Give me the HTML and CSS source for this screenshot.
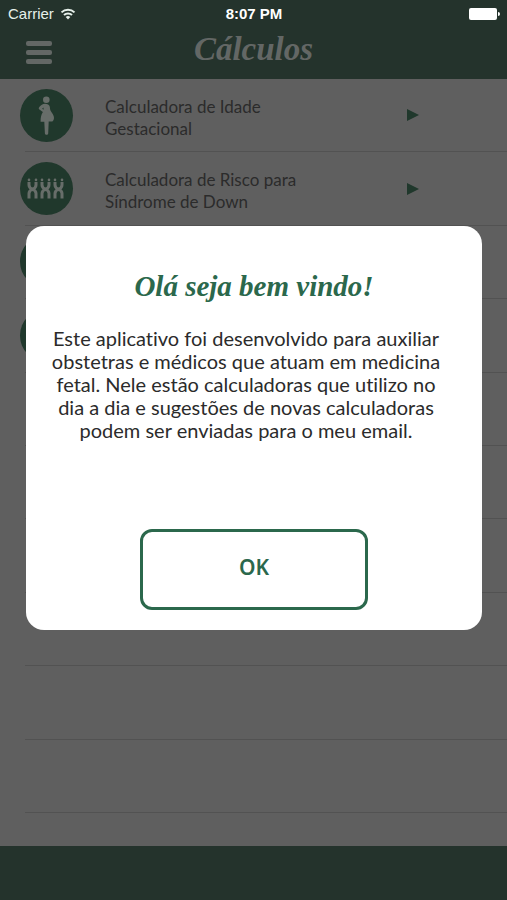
FILE: index.html
```html
<!DOCTYPE html>
<html lang="pt-BR">

<head>
	<meta charset="utf-8">
	<meta name="viewport" content="width=device-width, initial-scale=1">
	<title>Cálculos</title>
	<link rel="stylesheet" href="styles.css">
</head>

<body>
	<div class="app">
		<header class="header">
			<div class="status">
				<div class="carrier">
					<span>Carrier</span>
					<svg width="16" height="12" viewBox="0 0 16 12">
						<path d="M1.5 4.4a9.3 9.3 0 0 1 13 0M4 7a5.8 5.8 0 0 1 8 0" fill="none" stroke="#e6f0ea" stroke-width="2"/>
						<path d="M5.7 9a3.3 3.3 0 0 1 4.6 0L8 11.4z" fill="#e6f0ea"/>
					</svg>
				</div>
				<span class="time">8:07 PM</span>
				<svg class="battery" width="31" height="12" viewBox="0 0 31 12">
					<rect width="28" height="12" rx="2" fill="#fff"/>
					<path d="M29 4a2 2 0 0 1 0 4z" fill="#fff"/>
				</svg>
			</div>
			<div class="navbar">
				<button type="button" class="menu" aria-label="Menu">
					<span></span>
					<span></span>
					<span></span>
				</button>
				<h1>Cálculos</h1>
			</div>
		</header>

		<ul class="list">
			<li>
				<a href="#idade">
					<span class="icon">
						<svg width="53" height="53" viewBox="0 0 53 53" fill="#676d69">
							<circle cx="26.3" cy="10.8" r="3.3"/>
							<path d="M25 14.7c2.5 0 4.2 1 4.7 2.8.4 1.5.2 2.6.8 4 1.5 2.8 3.7 5 3.5 7.600-.1 1.800-.9 2.800-1.700 3.500H28.700L28.200 44.500c-.1 1.700-3.100 1.700-3.300 0l-.6-11.700h-3.700c-.1-4.500.6-7.200 2.300-9.900l-3.500-2.400c-.9-.7-.8-1.700-.1-2.500 1.700-1.700 3.200-3.300 5.700-3.300z"/>
							<path d="M23.5 18.4l-1.400 1.300 1.500 1z" fill="#20382c"/>
						</svg>
					</span>
					<span class="name">Calculadora de Idade Gestacional</span>
					<span class="arrow"></span>
				</a>
			</li>
			<li>
				<a href="#risco">
					<span class="icon">
						<svg width="53" height="53" viewBox="0 0 53 53" fill="none" stroke="#676d69" stroke-width="3" stroke-linecap="butt">
							<!-- chromosomes -->
							<g id="chromosome">
								<path d="M9 20v3c0 2 1.500 3.500 3.500 4.500 2-1 3.500-2.500 3.500-4.500v-3M9 36.500v-5c0-2 1.500-3.500 3.500-4.500 2 1 3.500 2.500 3.500 4.500v5"/>
								<path d="M9 17.800v.1M16 17.800v.1" stroke-width="2.600" stroke-linecap="round"/>
							</g>
							<use href="#chromosome" x="13"/>
							<use href="#chromosome" x="26"/>
						</svg>
					</span>
					<span class="name">Calculadora de Risco para Síndrome de Down</span>
					<span class="arrow"></span>
				</a>
			</li>
			<li><span class="icon"></span></li>
			<li><span class="icon"></span></li>
			<li></li>
			<li></li>
			<li></li>
			<li></li>
			<li></li>
			<li></li>
		</ul>

		<footer class="footer"></footer>
	</div>

	<div class="overlay">
		<div class="modal" role="dialog" aria-labelledby="welcome">
			<h2 id="welcome">Olá seja bem vindo!</h2>
			<p>
				Este aplicativo foi desenvolvido para auxiliar<br>
				obstetras e médicos que atuam em medicina<br>
				fetal. Nele estão calculadoras que utilizo no<br>
				dia a dia e sugestões de novas calculadoras<br>
				podem ser enviadas para o meu email.
			</p>
			<button type="button" class="ok">OK</button>
		</div>
	</div>
</body>

</html>
```

FILE: styles.css
```css
* {
	box-sizing: border-box;
}

body {
	margin: 0;
	background-color: #5f5f5f;
	font-family: Lato, sans-serif;
	font-variant-ligatures: none;
	color: #2b2b2b;
}

h1,
h2,
p,
ul {
	margin: 0;
	padding: 0;
}

h1,
h2 {
	font-family: "Liberation Serif", serif;
	font-style: italic;
	font-weight: bold;
	text-align: center;
}

.app {
	display: flex;
	flex-direction: column;
	min-height: 100vh;
}

/* header */
.header {
	height: 79px;
	background-color: #24332c;
}

.status {
	display: grid;
	grid-template-columns: 1fr auto 1fr;
	align-items: center;
	height: 27px;
	padding: 0 7px 0 8px;
	font-family: "Liberation Sans", sans-serif;
	font-size: 15px;
	color: #e6f0ea;
}

.carrier {
	display: flex;
	align-items: center;
	gap: 6px;
}

.time {
	font-weight: bold;
	color: #fff;
}

.battery {
	justify-self: end;
}

.navbar {
	display: grid;
	grid-template-columns: 78px 1fr 78px;
	align-items: center;
	height: 50px;
}

.menu {
	display: flex;
	flex-direction: column;
	gap: 4px;
	width: 26px;
	margin-left: 26px;
	padding: 0;
	border: none;
	background: none;
}

.menu span {
	height: 5px;
	border-radius: 2px;
	background-color: #636765;
}

h1 {
	font-size: 33px;
	line-height: 44px;
	padding-bottom: 6px;
	color: #636765;
}

/* list */
.list {
	display: grid;
	grid-auto-rows: 1fr;
	flex: 1;
	padding: 0 0 33px 25px;
	list-style: none;
}

.list li {
	display: flex;
	align-items: center;
	min-height: 60px;
	border-bottom: 1px solid #525252;
}

.list a {
	display: flex;
	align-items: center;
	flex: 1;
	color: #2b2b2b;
	text-decoration: none;
}

.icon {
	width: 53px;
	height: 53px;
	margin-left: -5px;
	border-radius: 50%;
	background-color: #20382c;
}

.name {
	width: 210px;
	margin-left: 32px;
	padding-top: 5px;
	font-size: 17px;
	line-height: 22px;
}

.arrow {
	margin-left: auto;
	margin-right: 88px;
	border-left: 12px solid #20382c;
	border-top: 6px solid transparent;
	border-bottom: 6px solid transparent;
}

.footer {
	height: 54px;
	background-color: #24332c;
}

/* welcome message */
.overlay {
	position: fixed;
	inset: 0;
	display: flex;
	align-items: center;
	padding: 0 25px 44px 26px;
}

.modal {
	display: flex;
	flex-direction: column;
	align-items: center;
	flex: 1;
	padding: 40px 20px 20px;
	border-radius: 18px;
	background-color: #fff;
}

h2 {
	font-size: 29px;
	line-height: 40px;
	color: #2b684c;
}

.modal p {
	margin-top: 21px;
	padding-right: 16px;
	font-size: 20px;
	line-height: 23px;
	text-align: center;
	white-space: nowrap;
}

.ok {
	width: 55%;
	min-width: 120px;
	height: 81px;
	margin-top: 87px;
	padding-bottom: 6px;
	border: 3px solid #2b684c;
	border-radius: 12px;
	background-color: #fff;
	font-family: "Noto Sans", sans-serif;
	font-size: 21px;
	font-weight: 600;
	color: #2b684c;
}
```
